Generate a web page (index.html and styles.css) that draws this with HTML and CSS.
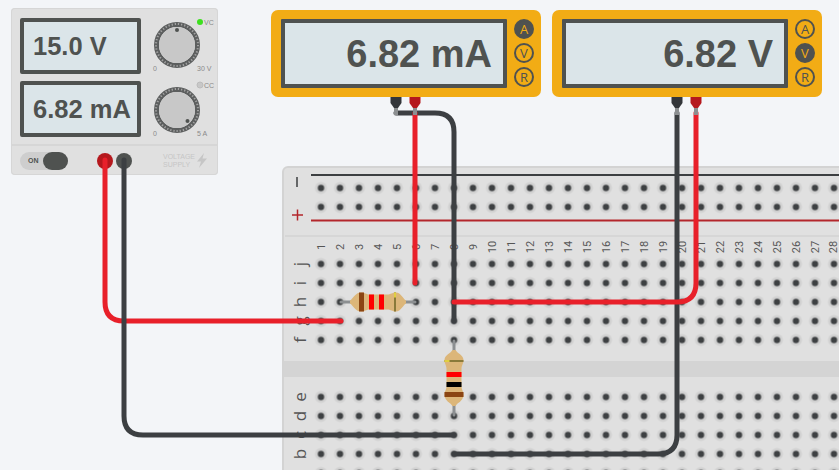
FILE: index.html
```html
<!DOCTYPE html>
<html lang="en">
<head>
    <meta charset="UTF-8">
    <meta name="viewport" content="width=device-width, initial-scale=1.0">
    <title>circuit</title>
    <link rel="stylesheet" href="styles.css">
</head>
<body>
<div class="canvas">

    <svg class="layer" width="839" height="470" viewBox="0 0 839 470">
        <defs>
            <pattern id="holes" x="311.5" y="178.5" width="19" height="19" patternUnits="userSpaceOnUse">
                <circle class="hole-ring" cx="9.5" cy="9.5" r="6"/>
                <circle class="hole" cx="9.5" cy="9.5" r="3.2"/>
            </pattern>
            <g id="resistor-body">
                <path class="lead" d="M-37 0H37"/>
                <path class="res-body" d="M-28 -1.500C-25 -3 -23 -9.500 -17 -9.500C-13 -9.500 -12 -7.500 -8 -7.500H9C13 -7.500 14 -9.500 18 -9.500C23 -9.500 25 -3 28 -1.500V1.500C25 3 23 9.500 18 9.500C14 9.500 13 7.500 9 7.500H-8C-12 7.500 -13 9.500 -17 9.500C-23 9.500 -25 3 -28 1.500Z"/>
            </g>
        </defs>

        <!-- breadboard -->
        <rect class="board" x="283" y="167" width="600" height="340" rx="5"/>
        <rect class="board-gap" x="284" y="361" width="560" height="16"/>
        <path class="board-line" d="M285 236H839"/>
        <path class="rail-black" d="M311 175H839"/>
        <path class="rail-red" d="M311 220.500H839"/>
        <rect x="311.500" y="178.500" width="530" height="38" fill="url(#holes)"/>
        <rect x="311.500" y="254.500" width="530" height="95" fill="url(#holes)"/>
        <rect x="311.500" y="387.500" width="530" height="95" fill="url(#holes)"/>

        <path class="rail-minus" d="M297 177V187"/>
        <path class="rail-plus" d="M292 215H303M297.500 209.500V220.500"/>

        <g class="num">
            <text transform="translate(321 247) rotate(-90)">1</text>
            <text transform="translate(340 247) rotate(-90)">2</text>
            <text transform="translate(359 247) rotate(-90)">3</text>
            <text transform="translate(378 247) rotate(-90)">4</text>
            <text transform="translate(397 247) rotate(-90)">5</text>
            <text transform="translate(416 247) rotate(-90)">6</text>
            <text transform="translate(435 247) rotate(-90)">7</text>
            <text transform="translate(454 247) rotate(-90)">8</text>
            <text transform="translate(473 247) rotate(-90)">9</text>
            <text transform="translate(492 247) rotate(-90)">10</text>
            <text transform="translate(511 247) rotate(-90)">11</text>
            <text transform="translate(530 247) rotate(-90)">12</text>
            <text transform="translate(549 247) rotate(-90)">13</text>
            <text transform="translate(568 247) rotate(-90)">14</text>
            <text transform="translate(587 247) rotate(-90)">15</text>
            <text transform="translate(606 247) rotate(-90)">16</text>
            <text transform="translate(625 247) rotate(-90)">17</text>
            <text transform="translate(644 247) rotate(-90)">18</text>
            <text transform="translate(663 247) rotate(-90)">19</text>
            <text transform="translate(682 247) rotate(-90)">20</text>
            <text transform="translate(701 247) rotate(-90)">21</text>
            <text transform="translate(720 247) rotate(-90)">22</text>
            <text transform="translate(739 247) rotate(-90)">23</text>
            <text transform="translate(758 247) rotate(-90)">24</text>
            <text transform="translate(777 247) rotate(-90)">25</text>
            <text transform="translate(796 247) rotate(-90)">26</text>
            <text transform="translate(815 247) rotate(-90)">27</text>
            <text transform="translate(833.500 247) rotate(-90)">28</text>
        </g>
        <g class="letter">
            <text transform="translate(299 264) rotate(-90)">j</text>
            <text transform="translate(299 283) rotate(-90)">i</text>
            <text transform="translate(299 302) rotate(-90)">h</text>
            <text transform="translate(299 321) rotate(-90)">g</text>
            <text transform="translate(299 340) rotate(-90)">f</text>
            <text transform="translate(299 397) rotate(-90)">e</text>
            <text transform="translate(299 416) rotate(-90)">d</text>
            <text transform="translate(299 435) rotate(-90)">c</text>
            <text transform="translate(299 454) rotate(-90)">b</text>
        </g>

        <!-- resistors -->
        <g transform="translate(378 302)">
            <use href="#resistor-body"/>
            <rect class="band-brown" x="-19" y="-9.500" width="5" height="19"/>
            <rect class="band-red" x="-9" y="-7.500" width="5" height="15"/>
            <rect class="band-red" x="1" y="-7.500" width="5" height="15"/>
            <rect class="band-gold" x="16" y="-9.500" width="2" height="19"/>
            <rect class="band-yellow" x="16" y="-9.500" width="2" height="5"/>
        </g>
        <g transform="translate(454 378) rotate(-90)">
            <use href="#resistor-body"/>
            <rect class="band-brown" x="-19" y="-9.500" width="5" height="19"/>
            <rect class="band-black" x="-9" y="-7.500" width="5" height="15"/>
            <rect class="band-red" x="1" y="-7.500" width="5" height="15"/>
            <rect class="band-gold" x="16" y="-9.500" width="2" height="19"/>
            <rect class="band-yellow" x="16" y="-9.500" width="2" height="5"/>
        </g>
    </svg>

    <div class="supply">
        <div class="supply-row">
            <div class="lcd">15.0 V</div>
            <svg class="knob" width="70" height="56" viewBox="0 0 70 56">
                <circle class="knob-rim" cx="31" cy="27" r="20.500"/>
                <circle class="knob-teeth" cx="31" cy="27" r="21"/>
                <circle class="knob-face" cx="31" cy="27" r="18"/>
                <circle class="knob-dot" cx="31" cy="12" r="2"/>
                <circle class="led-on" cx="54" cy="4" r="3"/>
                <text class="tiny" x="58" y="6.500">VC</text>
                <text class="tiny" x="7" y="52.500">0</text>
                <text class="tiny" x="51" y="52.500">30 V</text>
            </svg>
        </div>
        <div class="supply-row">
            <div class="lcd">6.82 mA</div>
            <svg class="knob" width="70" height="56" viewBox="0 0 70 56">
                <circle class="knob-rim" cx="31" cy="29" r="20.500"/>
                <circle class="knob-teeth" cx="31" cy="29" r="21"/>
                <circle class="knob-face" cx="31" cy="29" r="18"/>
                <circle class="knob-dot" cx="41.500" cy="40" r="2"/>
                <circle class="led-off" cx="54" cy="4" r="3"/>
                <text class="tiny" x="58" y="6.500">CC</text>
                <text class="tiny" x="7" y="54.500">0</text>
                <text class="tiny" x="51" y="54.500">5 A</text>
            </svg>
        </div>
        <div class="supply-bottom">
            <div class="switch"><span>ON</span><i></i></div>
            <div class="terminal terminal-red"></div>
            <div class="terminal terminal-dark"></div>
            <div class="supply-name">VOLTAGE<br>SUPPLY</div>
            <svg class="bolt" width="10" height="15" viewBox="0 0 10 15">
                <path d="M7 0L0 8.500H4L2 15L10 5.500H5.500Z"/>
            </svg>
        </div>
    </div>

    <div class="meter meter-a">
        <div class="meter-lcd">6.82 mA</div>
        <div class="meter-buttons">
            <div class="mode mode-on">A</div>
            <div class="mode">V</div>
            <div class="mode">R</div>
        </div>
    </div>

    <div class="meter meter-v">
        <div class="meter-lcd">6.82 V</div>
        <div class="meter-buttons">
            <div class="mode">A</div>
            <div class="mode mode-on">V</div>
            <div class="mode">R</div>
        </div>
    </div>

    <svg class="layer" width="839" height="470" viewBox="0 0 839 470">
        <!-- probes -->
        <path class="probe-black" d="M390.500 97H401.500V103L398 108H394L390.500 103Z"/>
        <path class="probe-red" d="M409.500 97H420.500V103L417 108H413L409.500 103Z"/>
        <path class="probe-black" d="M671.500 97H682.500V103L679 108H675L671.500 103Z"/>
        <path class="probe-red" d="M690.500 97H701.500V103L698 108H694L690.500 103Z"/>

        <!-- wires -->
        <path class="wire-dark" d="M396 113H435Q454 113 454 132V321"/>
        <path class="wire-red" d="M415 113V283"/>
        <path class="wire-dark" d="M677 113V435Q677 454 658 454H454"/>
        <path class="wire-red" d="M696 113V283Q696 302 677 302H454"/>
        <path class="wire-red" d="M105 160V302Q105 321 124 321H341"/>
        <path class="wire-dark" d="M124 160V416Q124 435 143 435H454"/>

        <rect class="tip" x="394" y="108" width="4" height="7"/>
        <rect class="tip" x="413" y="108" width="4" height="7"/>
        <rect class="tip" x="675" y="108" width="4" height="7"/>
        <rect class="tip" x="694" y="108" width="4" height="7"/>
    </svg>
</div>
</body>
</html>
```

FILE: styles.css
```css
body {
    margin: 0;
    background-color: #f3f5f8;
    font-family: "Liberation Sans", Arial, sans-serif;
}

.canvas {
    position: relative;
    width: 839px;
    height: 470px;
    overflow: hidden;
}

.layer {
    position: absolute;
    left: 0;
    top: 0;
}

/* breadboard */
.board {
    fill: #e0e0e0;
    stroke: #d3d3d3;
    stroke-width: 2;
}

.board-gap {
    fill: #d4d4d4;
}

.board-line {
    stroke: #d3d3d3;
    stroke-width: 1.5;
}

.rail-black {
    stroke: #3c3f41;
    stroke-width: 2;
}

.rail-red {
    stroke: #b3262b;
    stroke-width: 2;
}

.rail-minus {
    stroke: #3c3f41;
    stroke-width: 1.5;
}

.rail-plus {
    stroke: #b3262b;
    stroke-width: 1.5;
    fill: none;
}

.hole-ring {
    fill: #d1d1d1;
}

.hole {
    fill: #3d4042;
}

.num text {
    font-family: Roboto, sans-serif;
    font-size: 11px;
    fill: #555;
    text-anchor: middle;
    dominant-baseline: central;
}

.letter text {
    font-family: "Open Sans", sans-serif;
    font-size: 17px;
    fill: #555;
    text-anchor: middle;
    dominant-baseline: central;
}

/* resistors */
.lead {
    stroke: #8c8f91;
    stroke-width: 3;
    stroke-linecap: round;
}

.res-body {
    fill: #dcb679;
}

.band-brown {
    fill: #8b4513;
}

.band-red {
    fill: #ff0000;
}

.band-black {
    fill: #000;
}

.band-gold {
    fill: #8a7a3a;
}

.band-yellow {
    fill: #e0d040;
}

/* power supply */
.supply {
    position: absolute;
    left: 11px;
    top: 8px;
    width: 207px;
    height: 167px;
    box-sizing: border-box;
    padding-top: 10px;
    display: flex;
    flex-direction: column;
    gap: 7px;
    background-color: #e0e0e0;
    border-radius: 4px;
    box-shadow: inset 0 0 0 1px #d6d6d6;
}

.supply-row {
    display: flex;
    height: 56px;
    padding-left: 9px;
    gap: 5px;
}

.lcd {
    width: 121px;
    height: 56px;
    box-sizing: border-box;
    padding-left: 9px;
    display: flex;
    align-items: center;
    font-size: 25.500px;
    font-weight: bold;
    color: #4f5250;
    background-color: #dbe5e9;
    border: 4px solid #4f5250;
    border-radius: 2px;
}

.knob {
    overflow: visible;
}

.knob-rim {
    fill: none;
    stroke: #5c5e5e;
    stroke-width: 5;
}

.knob-teeth {
    fill: none;
    stroke: #a2a2a2;
    stroke-width: 2;
    stroke-dasharray: 1.300 1.900;
}

.knob-face {
    fill: #c8c8c8;
}

.knob-dot {
    fill: #4f5250;
}

.led-on {
    fill: #3ee01f;
}

.led-off {
    fill: #c8c8c8;
    stroke: #bcbcbc;
}

.tiny {
    font-size: 7px;
    fill: #8a8a8a;
}

.supply-bottom {
    display: flex;
    align-items: center;
    height: 31px;
    padding-left: 9px;
    border-top: 2px solid #d6d6d6;
}

.switch {
    position: relative;
    width: 48px;
    height: 18px;
    box-sizing: border-box;
    padding-left: 8px;
    display: flex;
    align-items: center;
    font-size: 7px;
    font-weight: bold;
    color: #4f5250;
    background-color: #cecece;
    border-radius: 9px;
}

.switch i {
    position: absolute;
    right: 0;
    top: 0;
    width: 25px;
    height: 18px;
    background-color: #4f5250;
    border-radius: 9px;
}

.terminal {
    width: 16px;
    height: 16px;
    border-radius: 50%;
}

.terminal-red {
    margin-left: 29px;
    background-color: #b5181d;
}

.terminal-dark {
    margin-left: 3px;
    background-color: #4f5250;
}

.supply-name {
    margin-left: 31px;
    width: 27px;
    font-size: 7px;
    line-height: 8px;
    text-align: center;
    color: #c6c6c6;
}

.bolt {
    margin-left: 7px;
}

.bolt path {
    fill: #c6c6c6;
}

/* multimeters */
.meter {
    position: absolute;
    top: 10px;
    width: 270px;
    height: 87px;
    box-sizing: border-box;
    padding: 9px 7px 9px 10px;
    display: flex;
    gap: 7px;
    background-color: #f2ac15;
    border-radius: 7px;
}

.meter-a {
    left: 271px;
}

.meter-v {
    left: 552px;
}

.meter-lcd {
    width: 226px;
    height: 69px;
    box-sizing: border-box;
    padding: 2px 11px 0 0;
    display: flex;
    align-items: center;
    justify-content: flex-end;
    font-size: 38px;
    font-weight: bold;
    color: #4f5250;
    background-color: #dbe5e9;
    border: 4px solid #4f5250;
    border-radius: 1px;
}

.meter-buttons {
    display: flex;
    flex-direction: column;
    gap: 4px;
}

.mode {
    width: 20px;
    height: 20px;
    box-sizing: border-box;
    display: flex;
    align-items: center;
    justify-content: center;
    font-family: "Open Sans", sans-serif;
    font-size: 13px;
    color: #4f5250;
    border: 2px solid #4f5250;
    border-radius: 50%;
}

.mode-on {
    color: #f2ac15;
    background-color: #4f5250;
}

/* wires */
.wire-red,
.wire-dark {
    fill: none;
    stroke-width: 5;
    stroke-linecap: round;
}

.wire-red {
    stroke: #e8202a;
}

.wire-dark {
    stroke: #3c3f42;
}

.probe-black {
    fill: #33363a;
}

.probe-red {
    fill: #b5181d;
}

.tip {
    fill: #8c8f91;
}
```
